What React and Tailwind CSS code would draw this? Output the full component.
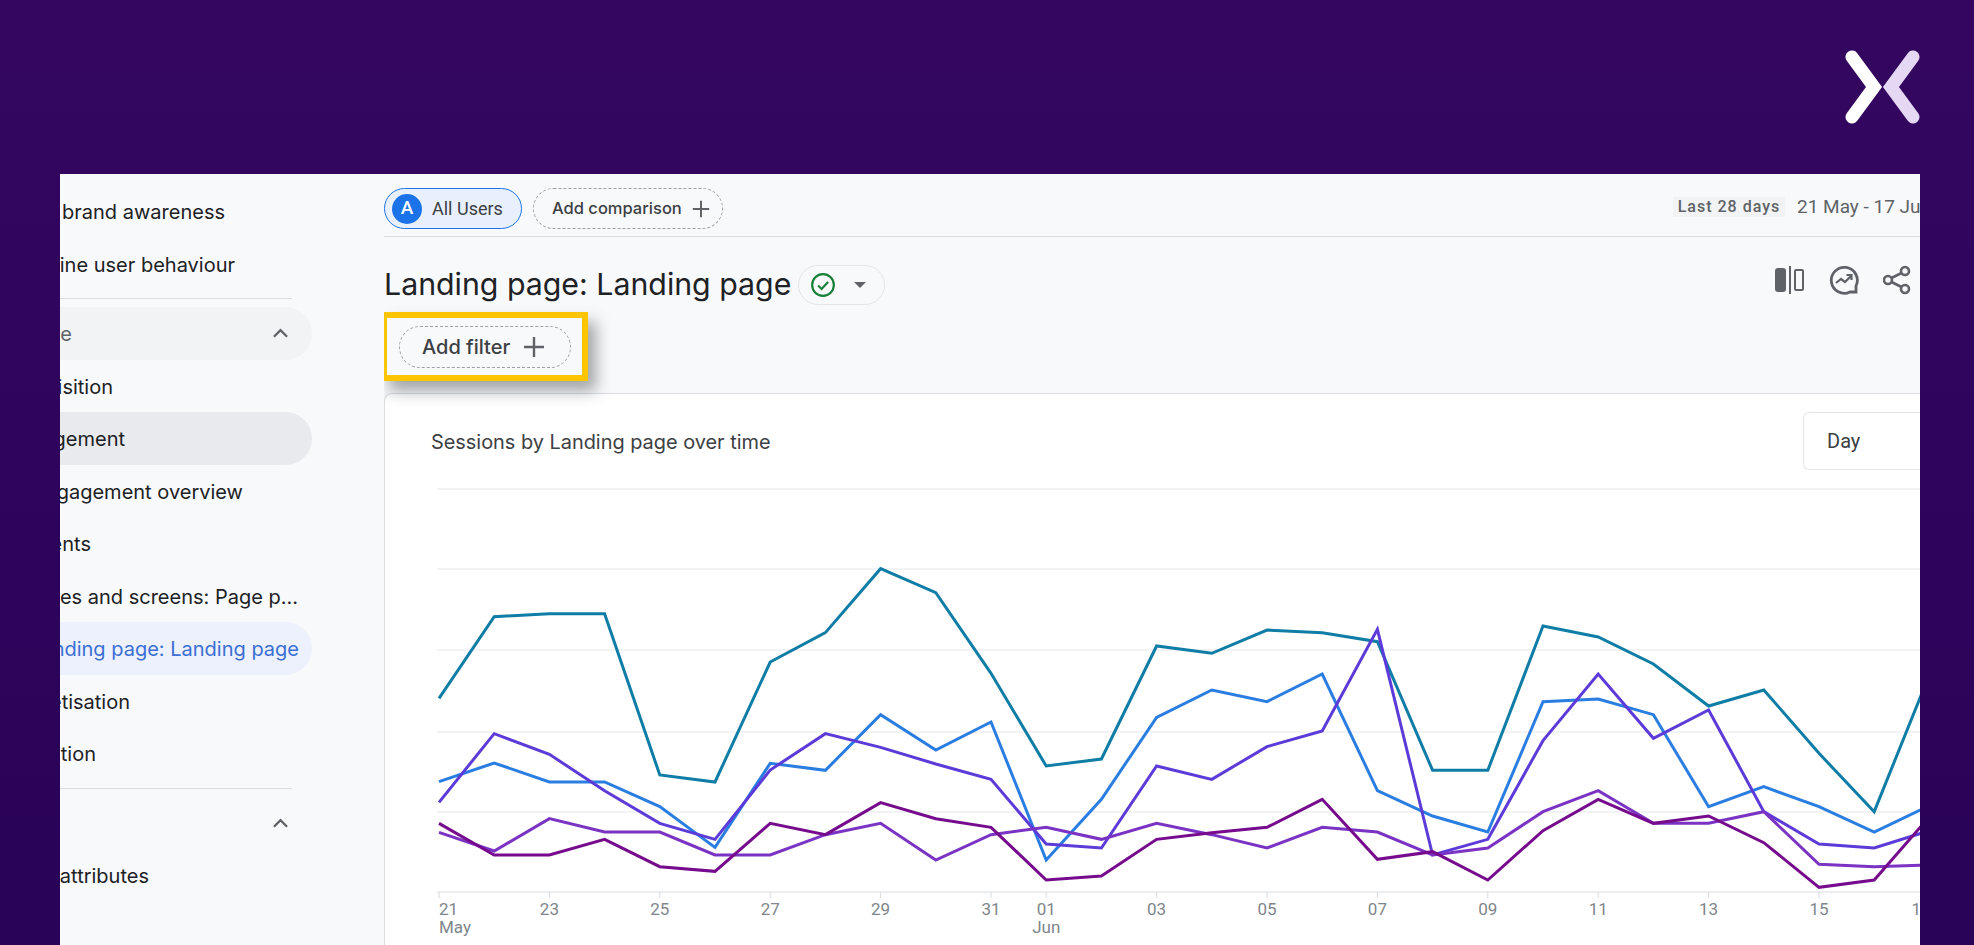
const sansFont = "font-['Inter','Noto_Sans',sans-serif]";

const navItems = [
  { label: "Generate brand awareness", w: "w-[165px]", top: "mt-[11px]" },
  { label: "Examine user behaviour", w: "w-[175px]" },
  { divider: true },
  { label: "Life cycle", w: "w-[12px]", pill: "bg-[#f1f3f4]", chevron: true, color: "text-[#5f6368]" },
  { label: "Acquisition", w: "w-[53px]" },
  { label: "Engagement", w: "w-[65px]", pill: "bg-[#e8eaed]" },
  { label: "Engagement overview", w: "w-[183px]" },
  { label: "Events", w: "w-[31px]" },
  { label: "Pages and screens: Page p...", w: "w-[238px]" },
  { label: "Landing page: Landing page", w: "w-[239px]", pill: "bg-[#ecf1fd]", color: "text-[#3b6fd4]" },
  { label: "Monetisation", w: "w-[70px]" },
  { label: "Retention", w: "w-[36px]" },
  { divider: true },
  { label: "", w: "w-[1px]", chevron: true },
  { label: "User attributes", w: "w-[89px]" },
];

// y values read off the chart, one per day from 21 May to 17 Jun
const series = [
  { color: "#107da6", ys: [475, 230, 221, 221, 705, 726, 366, 278, 86, 158, 400, 678, 657, 318, 340, 270, 278, 305, 691, 691, 258, 291, 372, 498, 450, 640, 815, 404] },
  { color: "#2a7de1", ys: [725, 669, 726, 726, 800, 922, 670, 691, 524, 630, 546, 960, 778, 532, 450, 485, 402, 752, 828, 876, 485, 477, 524, 800, 740, 800, 876, 797] },
  { color: "#5c3bd9", ys: [787, 581, 643, 752, 850, 898, 690, 581, 622, 672, 718, 912, 924, 678, 718, 620, 573, 268, 945, 898, 602, 402, 595, 510, 815, 912, 924, 872] },
  { color: "#7b33c4", ys: [877, 933, 836, 876, 876, 945, 945, 884, 850, 960, 884, 862, 898, 850, 884, 924, 862, 876, 945, 924, 815, 752, 850, 850, 815, 973, 980, 975] },
  { color: "#760b8d", ys: [850, 945, 945, 898, 980, 994, 850, 884, 788, 836, 862, 1020, 1008, 898, 878, 862, 778, 958, 935, 1020, 872, 778, 850, 828, 908, 1042, 1020, 830] },
];

const ticks = [
  { i: 2, t: "23" }, { i: 4, t: "25" }, { i: 6, t: "27" }, { i: 8, t: "29" }, { i: 10, t: "31" },
  { i: 11, t: "01", sub: "Jun" }, { i: 13, t: "03" }, { i: 15, t: "05" }, { i: 17, t: "07" },
  { i: 19, t: "09" }, { i: 21, t: "11" }, { i: 23, t: "13" }, { i: 25, t: "15" },
];

const dayX = (i) => 439 + i * 55.2;

function PlusIcon({ className }) {
  return (
    <svg viewBox="0 0 22 22" className={className} fill="none" stroke="#5f6368" strokeWidth="2.4">
      <path d="M11 1v20M1 11h20" />
    </svg>
  );
}

function ChevronUp() {
  return (
    <svg viewBox="0 0 16 10" className="w-[15px] h-[10px] mr-[24px]" fill="none" stroke="#5f6368" strokeWidth="2.4">
      <path d="M1 9l7-7 7 7" />
    </svg>
  );
}

function NavRow({ item }) {
  if (item.divider) return <div className="h-px w-[232px] bg-[#dadce0] my-[8px]" />;
  return (
    <div className={`h-[52.5px] w-[252px] rounded-r-full flex items-center justify-between ${item.pill || ""} ${item.top || ""}`}>
      <div className={`${item.w} shrink-0 flex justify-end overflow-hidden whitespace-nowrap text-[20px] pt-[2px] ${item.color || "text-[#202124]"}`}>
        <span className="shrink-0">{item.label}</span>
      </div>
      {item.chevron && <ChevronUp />}
    </div>
  );
}

function Chart() {
  return (
    <svg viewBox="385 488 1535 457" className="block w-[1535px] h-[457px]">
      {[489, 569, 650, 732, 812].map((y) => (
        <line key={y} x1="437" x2="1920" y1={y} y2={y} stroke="#eeeff1" strokeWidth="1.5" />
      ))}
      <line x1="437" x2="1920" y1="892" y2="892" stroke="#dadce0" strokeWidth="1" />
      {series.map((s) => (
        <polyline
          key={s.color}
          fill="none"
          stroke={s.color}
          strokeWidth="3"
          points={s.ys.map((y, i) => `${dayX(i)},${y / 3 + 540}`).join(" ")}
        />
      ))}
      <g fontFamily="Roboto, sans-serif" fontSize="17" fill="#80868b">
        <line x1="439" x2="439" y1="892" y2="898" stroke="#dadce0" />
        <text x="439" y="915">21</text>
        <text x="439" y="933">May</text>
        {ticks.map((t) => (
          <g key={t.t}>
            <line x1={dayX(t.i)} x2={dayX(t.i)} y1="892" y2="898" stroke="#dadce0" />
            <text x={dayX(t.i)} y="915" textAnchor="middle">{t.t}</text>
            {t.sub && <text x={dayX(t.i)} y="933" textAnchor="middle">{t.sub}</text>}
          </g>
        ))}
        <text x="1921" y="915" textAnchor="middle">17</text>
      </g>
    </svg>
  );
}

export default function App() {
  return (
    <div className={`relative h-[945px] w-[1974px] overflow-hidden bg-gradient-to-b from-[#340660] to-[#280358] pt-[174px] pl-[60px] pr-[54px] ${sansFont}`}>
      <svg viewBox="0 0 80 80" className="absolute left-[1843px] top-[48px] w-[80px] h-[80px]" fill="none" strokeWidth="13" strokeLinecap="round">
        <path d="M9 9l22 30L9 69" stroke="#ffffff" />
        <path d="M70 9L48 39l22 30" stroke="#e4d8f5" />
      </svg>

      <div className="flex h-[771px] bg-[#f8f9fb] overflow-hidden">
        <aside className="w-[324px] shrink-0 overflow-hidden">
          {navItems.map((item, i) => (
            <NavRow key={i} item={item} />
          ))}
        </aside>

        <main className="flex-1 min-w-0 overflow-hidden">
          <div className="h-[63px] border-b border-[#dadce0] flex items-center justify-between pt-[7px]">
            <div className="flex items-center gap-[11px]">
              <div className="h-[41px] w-[138px] rounded-full border border-[#1a73e8] bg-[#e8f0fe] flex items-center pl-[7px] gap-[10px]">
                <span className="w-[30px] h-[30px] rounded-full bg-[#1a73e8] text-white font-['Roboto',sans-serif] font-medium text-[19px] flex items-center justify-center">A</span>
                <span className="font-['Roboto',sans-serif] text-[18px] text-[#3c4043]">All Users</span>
              </div>
              <div className="h-[41px] w-[190px] rounded-full border border-dashed border-[#9aa0a6] flex items-center pl-[18px] gap-[10px]">
                <span className="text-[16.5px] font-medium text-[#3c4043] whitespace-nowrap">Add comparison</span>
                <PlusIcon className="w-[18px] h-[18px]" />
              </div>
            </div>
            <div className="flex items-center gap-[12px] whitespace-nowrap font-['Roboto',sans-serif] text-[#5f6368] overflow-hidden -mt-[3px]">
              <span className="bg-[#f1f3f4] h-[20px] w-[112px] flex items-center justify-center text-[16px] font-medium tracking-[1px]">Last 28 days</span>
              <span className="text-[19px] w-[123px] overflow-hidden">21 May - 17 Jun</span>
            </div>
          </div>

          <div className="h-[75px] flex items-center justify-between pr-[9px] pt-[20px]">
            <div className="flex items-center gap-[7px]">
              <h1 className="text-[30.3px] font-normal text-[#202124] whitespace-nowrap">Landing page: Landing page</h1>
              <div className="h-[40px] w-[87px] rounded-full border border-[#e3e5e8] flex items-center pl-[11px] gap-[18px]">
                <svg viewBox="0 0 24 24" className="w-[26px] h-[26px]" fill="none" stroke="#188038" strokeWidth="2">
                  <circle cx="12" cy="12" r="10" />
                  <path d="M7.5 12.5l3.2 3.2 6-6.5" />
                </svg>
                <span className="w-0 h-0 border-x-[6px] border-x-transparent border-t-[6px] border-t-[#5f6368]" />
              </div>
            </div>
            <div className="flex items-center gap-[24px] -mt-[9px]">
              <svg viewBox="0 0 30 30" className="w-[30px] h-[30px]" fill="none" stroke="#5f6368" strokeWidth="2">
                <rect x="1" y="4" width="9" height="22" rx="2" fill="#5f6368" />
                <path d="M15 1v28" />
                <rect x="20" y="5" width="8" height="20" rx="1" />
              </svg>
              <svg viewBox="0 0 30 30" className="w-[30px] h-[30px]" fill="none" stroke="#5f6368" strokeWidth="2.8">
                <path d="M27 27H21A13 13 0 1 1 27 21z" />
                <path d="M7 18l5-4 4 3 6-6M17.5 10h5v5" strokeWidth="2.2" />
              </svg>
              <svg viewBox="0 0 28 30" className="w-[28px] h-[30px]" fill="none" stroke="#5f6368" strokeWidth="2.6">
                <circle cx="22" cy="6" r="4" />
                <circle cx="5" cy="15" r="4" />
                <circle cx="22" cy="24" r="4" />
                <path d="M8.5 13l10-5M8.5 17l10 5" />
              </svg>
            </div>
          </div>

          <div className="-ml-[3px] h-[69px] w-[207px] border-[6px] border-[#fdc500] bg-[#f8f9fb] shadow-[8px_10px_14px_rgba(60,64,67,0.45)] relative z-10 flex items-center pl-[12px]">
            <div className="h-[42px] w-[172px] rounded-full border border-dashed border-[#9aa0a6] flex items-center pl-[22px] gap-[13px]">
              <span className="text-[20px] font-medium text-[#3c4043] whitespace-nowrap">Add filter</span>
              <PlusIcon className="w-[22px] h-[22px]" />
            </div>
          </div>

          <section className="mt-[12px] h-[560px] bg-white border-l border-t border-[#dadce0] rounded-tl-lg">
            <div className="h-[94px] flex items-center justify-between pl-[46px]">
              <h2 className="text-[19.9px] font-normal text-[#3c4043] whitespace-nowrap pt-[3px]">Sessions by Landing page over time</h2>
              <div className="h-[58px] w-[117px] rounded-l-md border border-r-0 border-[#e3e5e8] flex items-center pl-[23px] font-['Roboto',sans-serif] text-[20px] text-[#3c4043]">Day</div>
            </div>
            <Chart />
          </section>
        </main>
      </div>
    </div>
  );
}
